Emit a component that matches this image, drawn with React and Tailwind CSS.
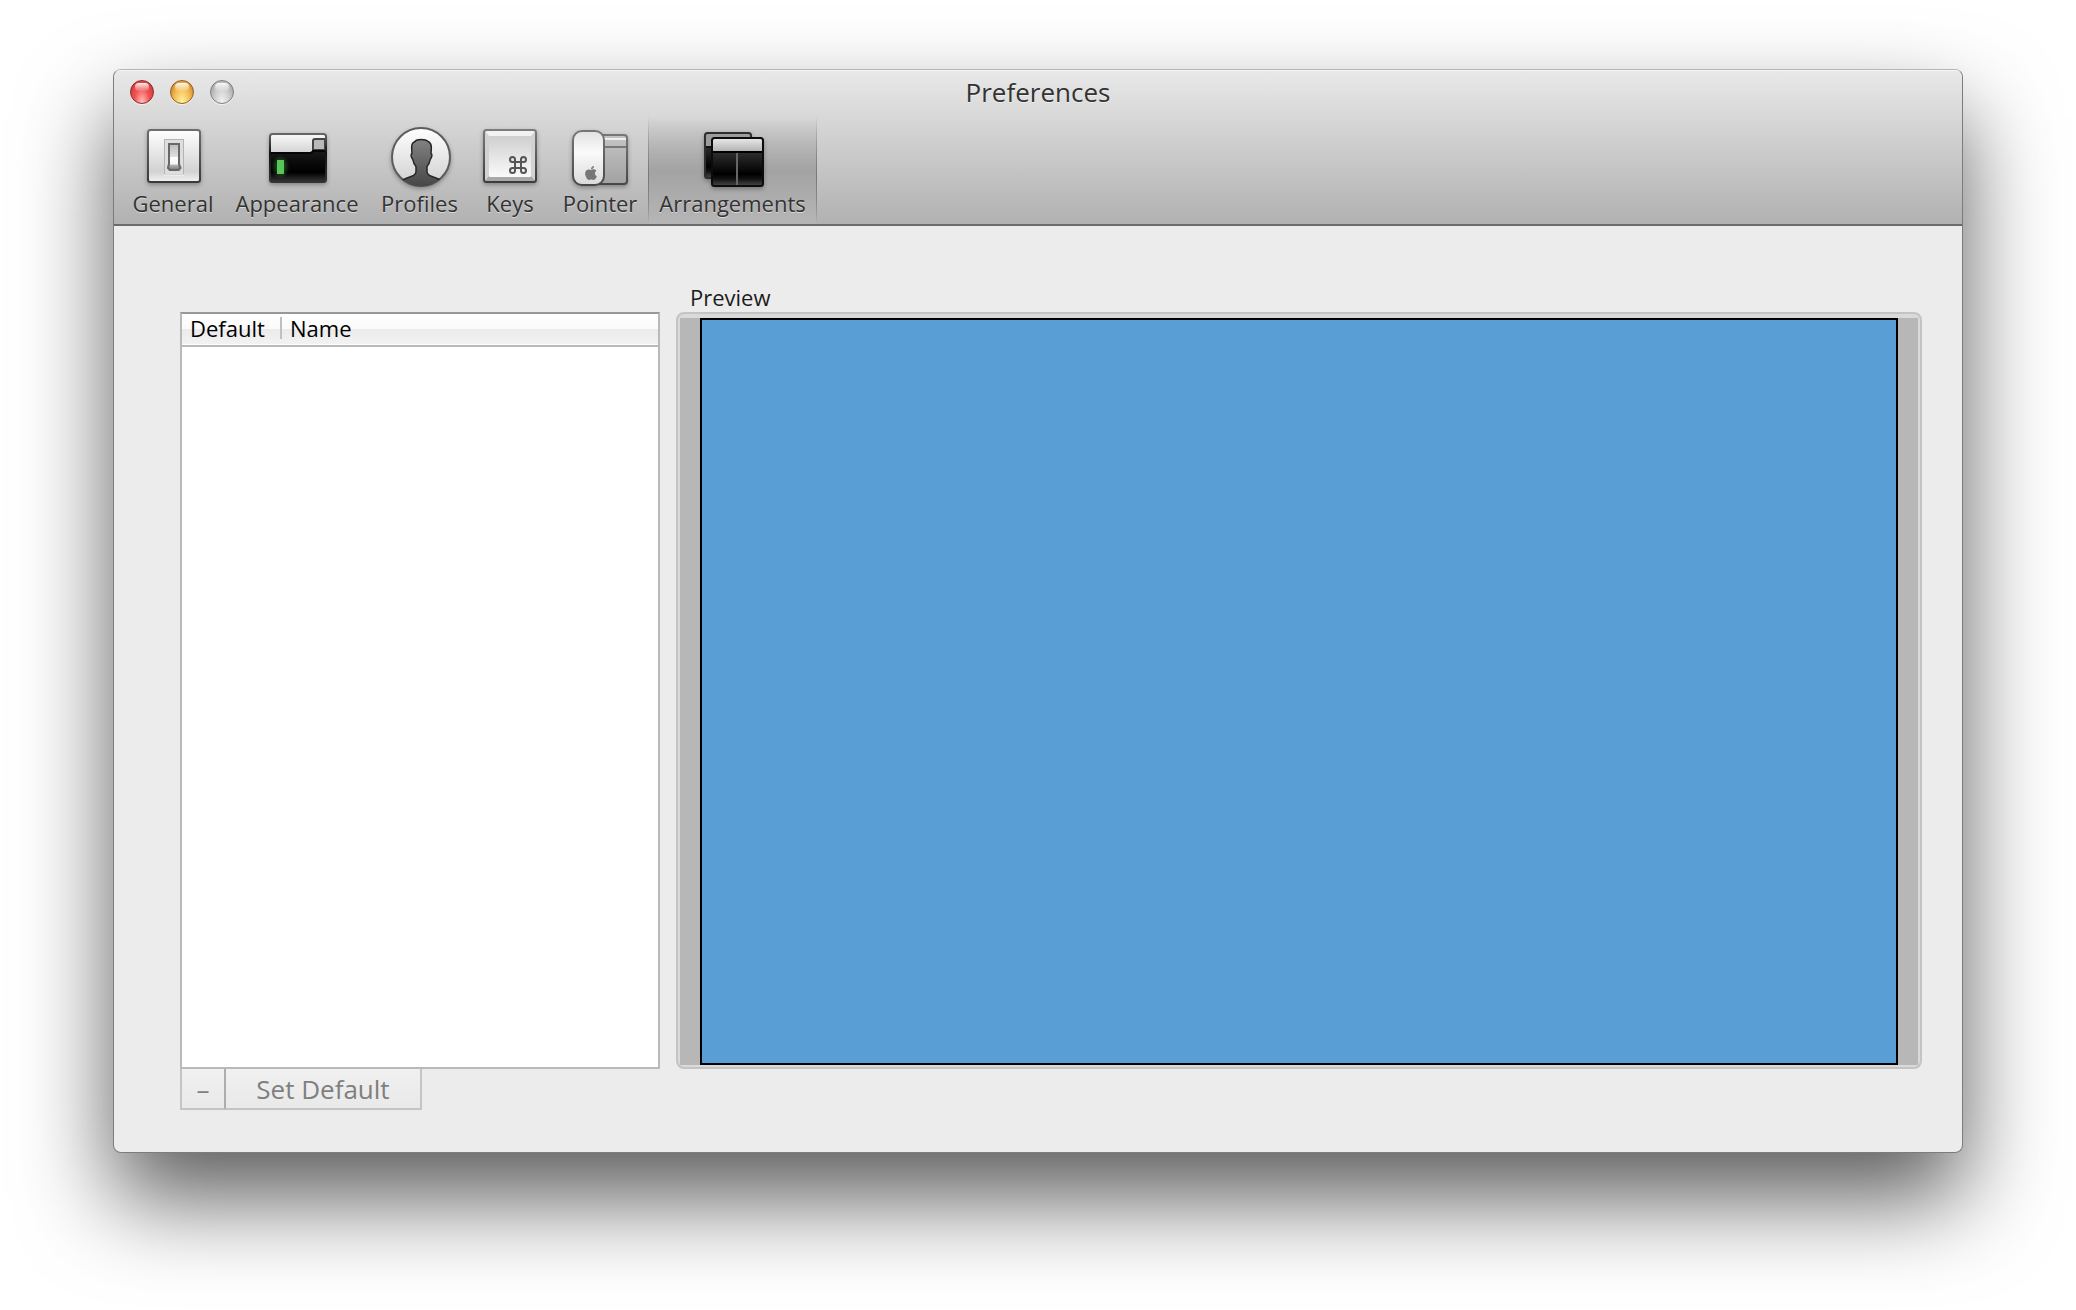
import React from "react";
import { FaApple } from "react-icons/fa";

const icon = "block h-16 w-16 shrink-0 overflow-visible drop-shadow-[0_2px_2px_rgba(0,0,0,0.3)]";

function GeneralIcon() {
  return (
    <svg className={icon} viewBox="0 0 64 64" aria-hidden="true">
      <defs>
        <linearGradient id="g-plate" x1="0" y1="0" x2="0" y2="1">
          <stop offset="0" stopColor="#fff" />
          <stop offset=".8" stopColor="#d2d2d2" />
          <stop offset="1" stopColor="#f2f2f2" />
        </linearGradient>
        <linearGradient id="g-edge" x1="0" y1="0" x2="0" y2="1">
          <stop offset="0" stopColor="#6e6e6e" />
          <stop offset="1" stopColor="#3a3a3a" />
        </linearGradient>
        <linearGradient id="g-knob" x1="0" y1="0" x2="0" y2="1">
          <stop offset="0" stopColor="#bdbdbd" />
          <stop offset=".5" stopColor="#e0e0e0" />
          <stop offset=".52" stopColor="#fff" />
          <stop offset=".78" stopColor="#f4f4f4" />
          <stop offset=".8" stopColor="#b8b8b8" />
          <stop offset="1" stopColor="#777" />
        </linearGradient>
      </defs>
      <rect x="7" y="5" width="52" height="52" rx="2.5" fill="url(#g-plate)" stroke="url(#g-edge)" strokeWidth="2" />
      <rect x="23.5" y="14.5" width="19" height="35" fill="#dedede" stroke="#b4b4b4" />
      <path d="M23 50H43" stroke="#f8f8f8" />
      <path d="M27 18h12v21l2 4-2 3H28l-2-3 1-4z" fill="#555" opacity=".45" />
      <path d="M28 19h10v20l1 4-2 2h-8l-2-2 1-4z" fill="url(#g-knob)" stroke="#686868" strokeWidth="2" />
    </svg>
  );
}

function AppearanceIcon() {
  return (
    <svg className={icon} viewBox="0 0 64 64" aria-hidden="true">
      <defs>
        <linearGradient id="a-screen" x1="0" y1="0" x2="0" y2="1">
          <stop offset="0" stopColor="#303030" />
          <stop offset=".55" stopColor="#0c0c0c" />
          <stop offset=".8" stopColor="#000" />
          <stop offset="1" stopColor="#363636" />
        </linearGradient>
        <linearGradient id="a-bar" x1="0" y1="0" x2="0" y2="1">
          <stop offset="0" stopColor="#f8f8f8" />
          <stop offset="1" stopColor="#d2d2d2" />
        </linearGradient>
        <linearGradient id="a-edge" x1="0" y1="0" x2="0" y2="1">
          <stop offset="0" stopColor="#666" />
          <stop offset=".4" stopColor="#111" />
          <stop offset="1" stopColor="#333" />
        </linearGradient>
        <radialGradient id="a-glow">
          <stop offset="0" stopColor="#4cc04c" stopOpacity=".55" />
          <stop offset="1" stopColor="#4cc04c" stopOpacity="0" />
        </radialGradient>
      </defs>
      <rect x="5" y="9" width="56" height="48" rx="2.5" fill="url(#a-screen)" />
      <path d="M6 10H60V25H49L47 28H6z" fill="url(#a-bar)" />
      <path d="M48 25V16q0-2 2-2H60V25z" fill="#b9b9b9" stroke="#444" strokeWidth="2" />
      <path d="M6 28H45q2 0 3-2H60" fill="none" stroke="#050505" strokeWidth="2" />
      <rect x="5" y="9" width="56" height="48" rx="2.5" fill="none" stroke="url(#a-edge)" strokeWidth="2" />
      <ellipse cx="15.5" cy="42" rx="9" ry="12" fill="url(#a-glow)" />
      <rect x="12" y="35" width="7" height="14" fill="#59c659" />
    </svg>
  );
}

function ProfilesIcon() {
  return (
    <svg className={icon} viewBox="0 0 64 64" aria-hidden="true">
      <defs>
        <linearGradient id="p-disc" x1="0" y1="0" x2="0" y2="1">
          <stop offset="0" stopColor="#fff" />
          <stop offset="1" stopColor="#cfcfcf" />
        </linearGradient>
        <linearGradient id="p-man" x1="0" y1="0" x2="0" y2="1">
          <stop offset="0" stopColor="#828282" />
          <stop offset="1" stopColor="#3c3c3c" />
        </linearGradient>
        <clipPath id="p-clip"><circle cx="33" cy="32" r="29.5" /></clipPath>
      </defs>
      <circle cx="33" cy="32" r="29" fill="url(#p-disc)" stroke="#5c5c5c" strokeWidth="2" />
      <g clipPath="url(#p-clip)">
        <path
          d="M33 14.5c-3 0-5 .5-6 2-3 1-3.5 4-3.300 7l.3 5c-1.500.5-1 4 .8 6 .5 3 1.400 5 3.200 7v5c0 3-2 4-5 5-5 2-9 3-11 6-2 4 2 10 6 12h31c4-2 8-8 6-12-2-3-6-4-11-6-3-1-5-2-5-5v-5c1.800-2 2.700-4 3.200-7 1.800-2 2.300-5.500.8-6l.3-5c.2-3-.8-6-3.300-7-1.500-1.500-4-2-7-2z"
          fill="url(#p-man)"
          stroke="#262626"
          strokeWidth="1.5"
        />
      </g>
    </svg>
  );
}

function KeysIcon() {
  return (
    <svg className={icon} viewBox="0 0 64 64" aria-hidden="true">
      <defs>
        <linearGradient id="k-face" x1="0" y1="0" x2="0" y2="1">
          <stop offset="0" stopColor="#cfcfcf" />
          <stop offset="1" stopColor="#fafafa" />
        </linearGradient>
        <linearGradient id="k-edge" x1="0" y1="0" x2="0" y2="1">
          <stop offset="0" stopColor="#7c7c7c" />
          <stop offset="1" stopColor="#3c3c3c" />
        </linearGradient>
      </defs>
      <rect x="6" y="5" width="52" height="52" rx="2.5" fill="#d2d2d2" />
      <path d="M7 6H57L53 11H11z" fill="#f2f2f2" />
      <path d="M7 56H57L53 51H11z" fill="#a9a9a9" />
      <rect x="11" y="11" width="42" height="41" rx="1" fill="url(#k-face)" />
      <rect x="6" y="5" width="52" height="52" rx="2.5" fill="none" stroke="url(#k-edge)" strokeWidth="2" />
      <path
        d="M37 37h6v6h-6zM37 37h-2.500a2.500 2.500 0 1 1 2.500-2.500zM43 37v-2.500a2.500 2.500 0 1 1 2.500 2.500zM43 43h2.500a2.500 2.500 0 1 1-2.500 2.500zM37 43v2.500a2.500 2.500 0 1 1-2.500-2.500z"
        fill="none"
        stroke="#555"
        strokeWidth="2"
      />
    </svg>
  );
}

function PointerIcon() {
  return (
    <svg className={icon} viewBox="0 0 64 64" aria-hidden="true">
      <defs>
        <linearGradient id="m-body" x1="0" y1="0" x2="0" y2="1">
          <stop offset="0" stopColor="#e2e2e2" />
          <stop offset=".4" stopColor="#fafafa" />
          <stop offset="1" stopColor="#dadada" />
        </linearGradient>
        <linearGradient id="m-pad" x1="0" y1="0" x2="0" y2="1">
          <stop offset="0" stopColor="#c4c4c4" />
          <stop offset="1" stopColor="#a2a2a2" />
        </linearGradient>
        <linearGradient id="m-edge" x1="0" y1="0" x2="0" y2="1">
          <stop offset="0" stopColor="#777" />
          <stop offset="1" stopColor="#484848" />
        </linearGradient>
      </defs>
      <rect x="22" y="10" width="37" height="49" rx="3" fill="url(#m-pad)" stroke="url(#m-edge)" strokeWidth="2" />
      <path d="M34 14H58" stroke="#eee" strokeWidth="2" />
      <path d="M34 22H58" stroke="#777" strokeWidth="2" />
      <rect x="5" y="6" width="31" height="54" rx="9" fill="url(#m-body)" stroke="url(#m-edge)" strokeWidth="2" />
      <FaApple x="15" y="40" width="11" height="12" color="#777" />
    </svg>
  );
}

function ArrangementsIcon() {
  return (
    <svg className={icon} viewBox="0 0 64 64" aria-hidden="true">
      <defs>
        <linearGradient id="r-screen" x1="0" y1="0" x2="0" y2="1">
          <stop offset="0" stopColor="#4c4c4c" />
          <stop offset=".75" stopColor="#000" />
          <stop offset=".85" stopColor="#111" />
          <stop offset="1" stopColor="#4a4a4a" />
        </linearGradient>
        <linearGradient id="r-bar" x1="0" y1="0" x2="0" y2="1">
          <stop offset="0" stopColor="#e6e6e6" />
          <stop offset="1" stopColor="#b0b0b0" />
        </linearGradient>
      </defs>
      <rect x="4" y="8" width="46" height="45" rx="2.5" fill="url(#r-screen)" />
      <path d="M5 9H49V22H5z" fill="#9c9c9c" />
      <path d="M4 22H12" stroke="#111" strokeWidth="2" />
      <rect x="4" y="8" width="46" height="45" rx="2.5" fill="none" stroke="#2e2e2e" strokeWidth="2" />
      <rect x="11" y="13" width="51" height="48" rx="2.5" fill="url(#r-screen)" />
      <path d="M12 14H61V27H12z" fill="url(#r-bar)" />
      <path d="M11 27H62" stroke="#000" strokeWidth="2" />
      <path d="M36 28V60" stroke="#666" strokeWidth="2" />
      <rect x="11" y="13" width="51" height="48" rx="2.5" fill="none" stroke="#0c0c0c" strokeWidth="2" />
    </svg>
  );
}

const tabs = [
  { label: "General", Icon: GeneralIcon, width: "w-[100px]" },
  { label: "Appearance", Icon: AppearanceIcon, width: "w-[148px]" },
  { label: "Profiles", Icon: ProfilesIcon, width: "w-[97px]" },
  { label: "Keys", Icon: KeysIcon, width: "w-[84px]" },
  { label: "Pointer", Icon: PointerIcon, width: "w-[96px]" },
  { label: "Arrangements", Icon: ArrangementsIcon, width: "w-[169px]", selected: true },
];

const lights = [
  { label: "Close", tone: "border-[#8c2a2a] bg-[radial-gradient(ellipse_at_50%_100%,#ffc4c4_0%,#f25050_50%,#dd4343_75%,#8d1f1f_100%)]" },
  { label: "Minimize", tone: "border-[#8f6222] bg-[radial-gradient(ellipse_at_50%_100%,#fff6a0_0%,#f4bd55_50%,#e09a3a_75%,#8a5716_100%)]" },
  { label: "Zoom", tone: "border-[#808080] bg-[radial-gradient(ellipse_at_50%_100%,#f4f4f4_0%,#cdcdcd_50%,#b4b4b4_75%,#828282_100%)]" },
];

function Tab({ label, Icon, width, selected }) {
  return (
    <button
      type="button"
      aria-pressed={!!selected}
      className={
        width +
        " flex shrink-0 flex-col items-center pt-2 whitespace-nowrap" +
        (selected
          ? " border-x border-solid [border-image:linear-gradient(to_bottom,transparent,#777_55%,#8a8a8a_80%,transparent)_1] bg-linear-to-b from-transparent via-[#a3a3a3] via-50% to-[#b6b6b6]"
          : "")
      }
    >
      <Icon />
      <span className="text-[22px] leading-7 font-medium text-[#333] [text-shadow:0_1px_0_rgba(255,255,255,0.5)]">{label}</span>
    </button>
  );
}

export default function App() {
  return (
    <div className="flex h-screen min-h-[700px] flex-col overflow-hidden bg-white px-[113px] pt-[69px] pb-[157px] font-['Open_Sans','Noto_Sans',sans-serif]">
      <main className="flex flex-1 flex-col overflow-hidden rounded-[8px] border border-[#7c7c7c] border-t-[#b5b5b5] bg-[#ececec] shadow-[0_46px_92px_rgba(0,0,0,0.64)]">
        <header className="border-b-2 border-[#6b6b6b] bg-linear-to-b from-[#e9e9e9] to-[#b1b1b1] shadow-[inset_0_1px_0_#f6f6f6]">
          <div className="grid h-[47px] grid-cols-[1fr_auto_1fr] items-center px-4 pb-1">
            <div className="flex gap-4">
              {lights.map(({ label, tone }) => (
                <button
                  key={label}
                  type="button"
                  aria-label={label}
                  className={"flex h-6 w-6 justify-center rounded-full border shadow-[0_1px_0_rgba(255,255,255,0.6)] " + tone}
                >
                  <span className="mt-0.5 h-2 w-3.5 rounded-full bg-linear-to-b from-white/90 to-white/10" />
                </button>
              ))}
            </div>
            <h1 className="text-[26px] leading-8 text-[#333] [text-shadow:0_1px_0_rgba(255,255,255,0.5)]">Preferences</h1>
          </div>
          <nav aria-label="Preferences sections" className="flex h-[107px] pl-[9px]">
            {tabs.map((t) => (
              <Tab key={t.label} {...t} />
            ))}
          </nav>
        </header>

        <div className="grid flex-1 grid-cols-[480px_1fr] grid-rows-[86px_1fr_41px] gap-x-4 pr-10 pb-[42px] pl-[66px]">
          <h2 className="col-start-2 self-end px-[14px] text-[22px] leading-[30px] text-[#1c1c1c]">Preview</h2>

          <section className="col-start-1 row-start-2 border-2 border-[#b9b9b9] border-t-[#989898] bg-white" aria-label="Arrangements">
            <table className="w-full border-collapse text-left text-[22px] leading-7 font-medium text-black">
              <thead>
                <tr className="border-b-2 border-[#b9b9b9] bg-[linear-gradient(#fff_0%,#fafafa_50%,#ebebeb_50%,#f2f2f2_100%)]">
                  <th scope="col" className="w-[100px] p-0 pb-[3px] font-medium">
                    <div className="flex items-center justify-between pl-2">
                      Default
                      <span className="h-[22px] w-0.5 bg-[#c0c0c0]" />
                    </div>
                  </th>
                  <th scope="col" className="px-2 pt-0 pb-[3px] font-medium">Name</th>
                </tr>
              </thead>
              <tbody />
            </table>
          </section>

          <section className="col-start-2 row-start-2 flex rounded-[8px] border-2 border-[#c4c4c4] bg-[#dadada] px-0.5 pt-1 pb-0.5" aria-label="Preview">
            <div className="flex flex-1 bg-[#b7b7b7] px-5">
              <div className="flex-1 border-2 border-black bg-[#599fd6]" />
            </div>
          </section>

          <div className="col-start-1 row-start-3 flex text-[26px] leading-8 font-medium text-[#7f7f7f]">
            <button
              type="button"
              disabled
              aria-label="Remove"
              className="w-[46px] border-x-2 border-b-2 border-[#c4c4c4] border-r-[#adadad] bg-linear-to-b from-[#f0f0f0] to-[#e9e9e9]"
            >
              –
            </button>
            <button
              type="button"
              disabled
              className="w-[196px] border-r-2 border-b-2 border-[#c4c4c4] bg-linear-to-b from-[#f0f0f0] to-[#e9e9e9]"
            >
              Set Default
            </button>
          </div>
        </div>
      </main>
    </div>
  );
}
